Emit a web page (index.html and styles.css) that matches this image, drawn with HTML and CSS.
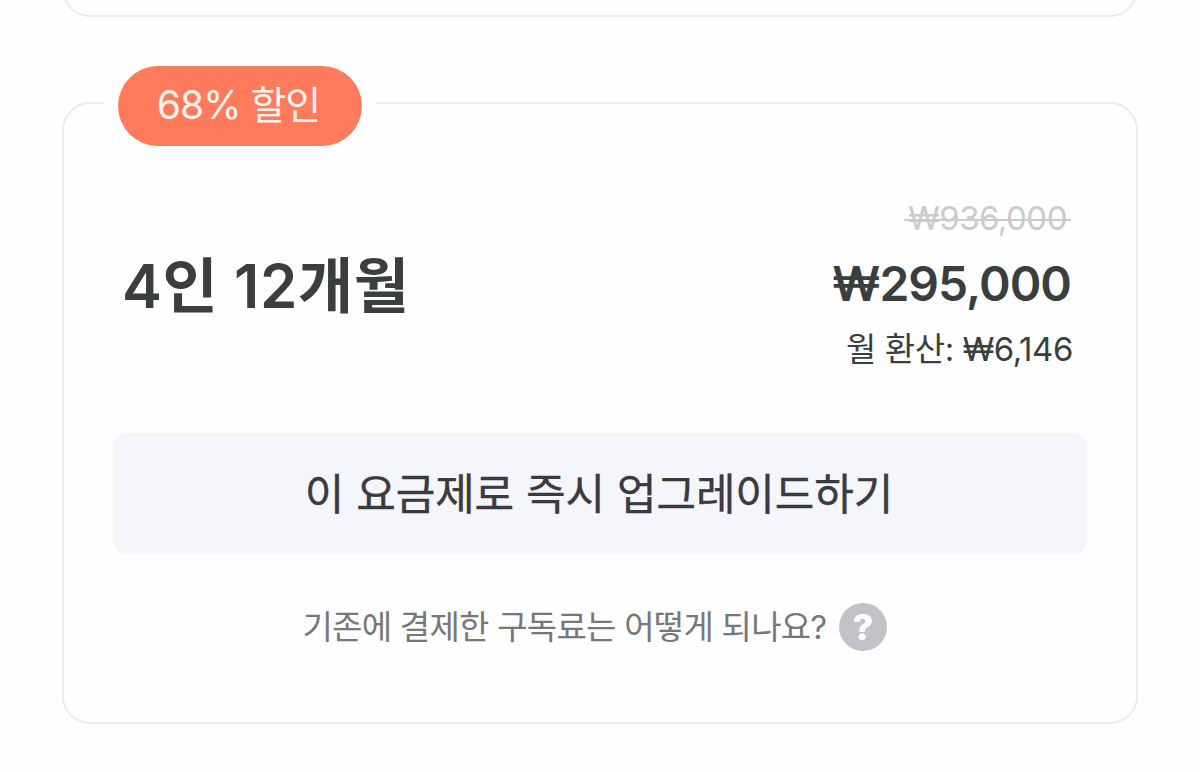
FILE: index.html
```html
<!DOCTYPE html>
<html lang="ko">
<head>
    <meta charset="UTF-8">
    <meta name="viewport" content="width=device-width, initial-scale=1.0">
    <title>요금제 업그레이드</title>
    <link rel="stylesheet" href="styles.css">
</head>
<body>
    <div class="plans">
        <div class="plan plan-previous"></div>
        <div class="plan">
            <div class="badge">68% 할인</div>
            <div class="summary">
                <h2>4인 12개월</h2>
                <div class="prices">
                    <div class="old-price"><s>₩936,000</s></div>
                    <div class="price">₩295,000</div>
                    <div class="monthly">월 환산: ₩6,146</div>
                </div>
            </div>
            <button class="upgrade">이 요금제로 즉시 업그레이드하기</button>
            <div class="help">
                <span>기존에 결제한 구독료는 어떻게 되나요?</span>
                <span class="help-icon">?</span>
            </div>
        </div>
    </div>
</body>
</html>
```
FILE: styles.css
```css
* {
    box-sizing: border-box;
}

body {
    margin: 0;
    height: 772px;
    overflow: hidden;
    background-color: #fefefe;
    color: #3a3e3f;
    font-family: Inter, "Noto Sans CJK KR", sans-serif;
}

.plans {
    padding: 0 62px;
}

.plan {
    position: relative;
    height: 622px;
    padding: 89px 49px 0;
    border: 2px solid #ebebec;
    border-radius: 28px;
}

/* only the bottom edge of this card is in view */
.plan-previous {
    height: 77px;
    margin-top: -60px;
    margin-bottom: 85px;
    padding: 0;
}

/* sits over the top border, the ring cuts the line */
.badge {
    position: absolute;
    top: -38px;
    left: 54px;
    width: 244px;
    height: 80px;
    padding-right: 3px;
    border-radius: 40px;
    background-color: #ff7b5b;
    box-shadow: 0 0 0 14px #fefefe;
    color: #fff3ee;
    font-size: 39px;
    line-height: 78px;
    letter-spacing: -1px;
    text-align: center;
    white-space: nowrap;
}

.summary {
    display: flex;
    justify-content: space-between;
    height: 240px;
    padding: 0 14px 0 9px;
}

h2 {
    margin: 50px 0 0;
    font-size: 60px;
    font-weight: 600;
    line-height: 86px;
    letter-spacing: 0.6px;
    white-space: nowrap;
}

.prices {
    text-align: right;
    white-space: nowrap;
}

.old-price {
    padding-right: 2px;
    color: #cbcbce;
    font-size: 33px;
    line-height: 50px;
    letter-spacing: -0.5px;
}

.old-price s {
    padding: 0 4px;
    background: linear-gradient(#cbcbce, #cbcbce) 0 55% / 100% 2px no-repeat;
    text-decoration: none;
}

.price {
    padding-right: 2px;
    font-size: 48px;
    font-weight: 600;
    line-height: 82px;
    letter-spacing: -1px;
}

.monthly {
    font-size: 33px;
    line-height: 49px;
    letter-spacing: -0.4px;
}

.upgrade {
    display: block;
    width: 100%;
    height: 121px;
    padding: 1px 2px 0 0;
    border: 0;
    border-radius: 14px;
    background-color: #f5f6fb;
    color: #3a3a40;
    font: 400 43px/120px Inter, "Noto Sans CJK KR", sans-serif;
    letter-spacing: -0.1px;
    -webkit-text-stroke: 0.4px;
}

.help {
    display: flex;
    justify-content: center;
    align-items: center;
    gap: 12px;
    margin-top: 48px;
    padding-right: 11px;
    color: #77777a;
    font-size: 33px;
    line-height: 50px;
    letter-spacing: -0.75px;
}

.help-icon {
    width: 48px;
    height: 48px;
    border-radius: 50%;
    background-color: #c2c2c8;
    color: #fff;
    font-size: 36px;
    font-weight: 800;
    line-height: 48px;
    text-align: center;
}
```
